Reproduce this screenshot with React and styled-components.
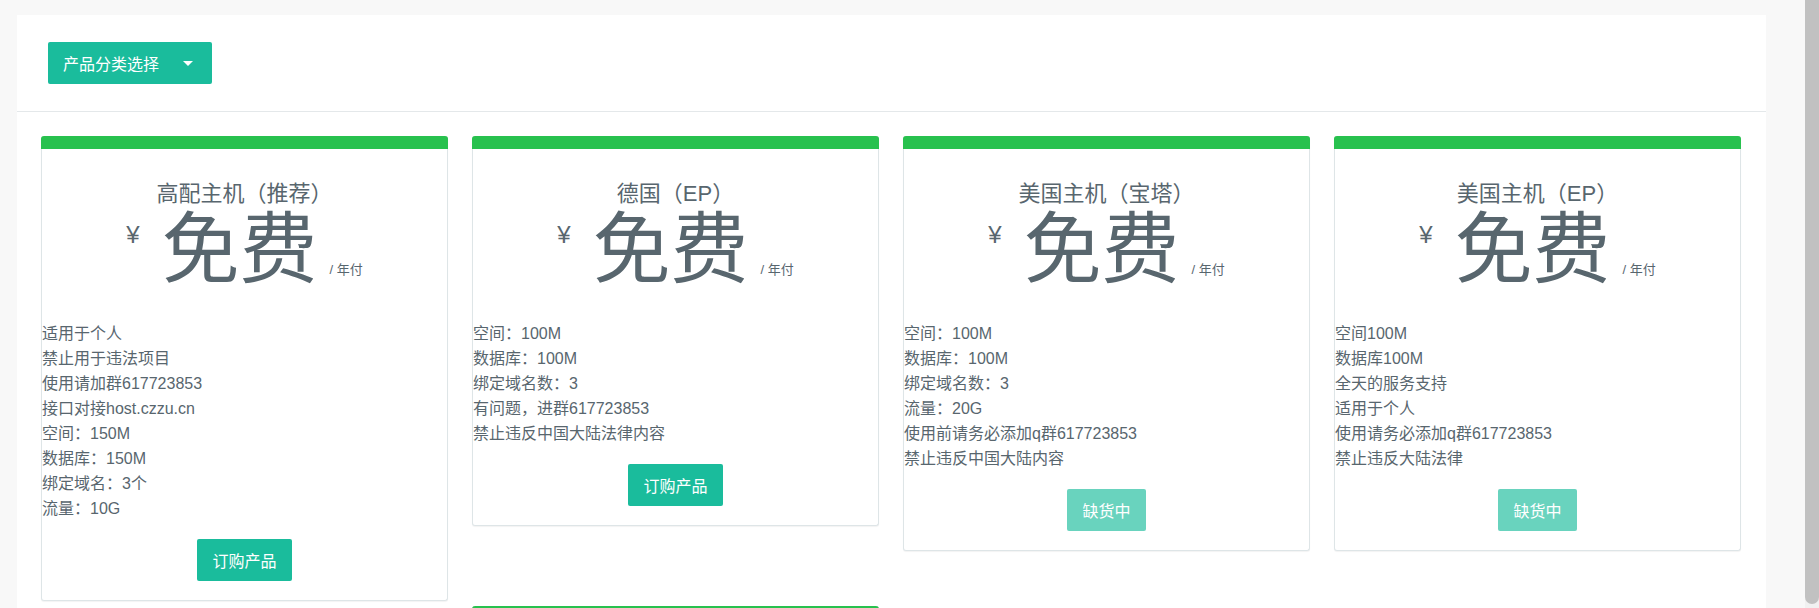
import React from 'react';
import styled, { createGlobalStyle } from 'styled-components';

const Global = createGlobalStyle`
  html, body { margin: 0; padding: 0; height: 608px; overflow: hidden; background: #f8f8f8; }
  body { font-family: "Liberation Sans", "Noto Sans CJK SC", sans-serif; }
`;

const products = [
  { name: '高配主机（推荐）', lines: ['适用于个人', '禁止用于违法项目', '使用请加群617723853', '接口对接host.czzu.cn', '空间：150M', '数据库：150M', '绑定域名：3个', '流量：10G'], stock: true },
  { name: '德国（EP）', lines: ['空间：100M', '数据库：100M', '绑定域名数：3', '有问题，进群617723853', '禁止违反中国大陆法律内容'], stock: true },
  { name: '美国主机（宝塔）', lines: ['空间：100M', '数据库：100M', '绑定域名数：3', '流量：20G', '使用前请务必添加q群617723853', '禁止违反中国大陆内容'], stock: false },
  { name: '美国主机（EP）', lines: ['空间100M', '数据库100M', '全天的服务支持', '适用于个人', '使用请务必添加q群617723853', '禁止违反大陆法律'], stock: false },
  { name: '香港主机', lines: ['空间：100M'], stock: true, col: 2 },
];

const App = () => (
  <Page>
    <Global />
    <Main>
      <Panel>
        <Header>
          <Dropdown>产品分类选择<Caret /></Dropdown>
        </Header>
        <Grid>
          {products.map((p) => (
            <Card key={p.name} col={p.col}>
              <Bar />
              <Title>{p.name}</Title>
              <Price>
                <Yen>¥</Yen>
                <Amount>免费</Amount>
                <Cycle>/ 年付</Cycle>
              </Price>
              <List>
                {p.lines.map((l) => <li key={l}>{l}</li>)}
              </List>
              <Buy disabled={!p.stock}>{p.stock ? '订购产品' : '缺货中'}</Buy>
            </Card>
          ))}
        </Grid>
      </Panel>
    </Main>
    <Track><Thumb /></Track>
  </Page>
);

const Page = styled.div`
  display: flex;
  height: 608px;
  overflow: hidden;
`;
const Main = styled.div`
  flex: 1;
  padding: 15px 39px 0 17px;
`;
const Track = styled.div`
  width: 14px;
  padding: 0 0 2px;
  background: #f1f1f1;
`;
const Thumb = styled.div`
  height: 604px;
  background: #c1c1c1;
  border-radius: 0 0 8px 8px;
`;
const Panel = styled.div`
  background: #fff;
  min-height: 700px;
`;
const Header = styled.div`
  height: 97px;
  padding: 27px 0 0 31px;
  box-sizing: border-box;
  border-bottom: 1px solid #e4e8ea;
`;
const Dropdown = styled.button`
  height: 42px;
  width: 164px;
  border: 0;
  border-radius: 2px;
  background: #1abc9c;
  color: #fff;
  font-family: inherit;
  font-size: 16px;
  display: flex;
  align-items: center;
  padding: 0 15px;
  gap: 24px;
`;
const Caret = styled.span`
  width: 0;
  height: 0;
  border-left: 5px solid transparent;
  border-right: 5px solid transparent;
  border-top: 5px solid #fff;
`;
const Grid = styled.div`
  display: grid;
  grid-template-columns: repeat(4, 407px);
  column-gap: 24px;
  padding: 24px 0 0 24px;
  align-items: start;
`;
const Card = styled.div`
  grid-column: ${(p) => p.col || 'auto'};
  background: #fff;
  border: 1px solid #dee5e7;
  border-top: 0;
  border-radius: 3px;
  box-shadow: 0 1px 1px rgba(0, 0, 0, 0.05);
  padding-bottom: 19px;
  margin-bottom: 5px;
  text-align: center;
  color: #58666e;
`;
const Bar = styled.div`
  height: 13px;
  margin: 0 -1px;
  background: #28c14e;
  border-radius: 3px 3px 0 0;
`;
const Title = styled.div`
  font-size: 22px;
  line-height: 26px;
  margin-top: 32px;
`;
const Price = styled.div`
  display: flex;
  justify-content: center;
  align-items: flex-start;
  height: 92px;
`;
const Yen = styled.span`
  font-size: 24px;
  margin-top: 14px;
  margin-right: 22px;
`;
const Amount = styled.span`
  font-size: 78px;
  line-height: 86px;
`;
const Cycle = styled.span`
  font-size: 13px;
  margin-top: 52px;
  margin-left: 12px;
`;
const List = styled.ul`
  list-style: none;
  margin: 22px 0 0;
  padding: 0;
  text-align: left;
  font-size: 16px;
  line-height: 25px;
  color: #58666e;
`;
const Buy = styled.button`
  margin-top: 18px;
  height: 42px;
  padding: 0 15px;
  border: 0;
  border-radius: 2px;
  background: #1abc9c;
  opacity: ${(p) => (p.disabled ? 0.65 : 1)};
  color: #fff;
  font-family: inherit;
  font-size: 16px;
`;

export default App;
